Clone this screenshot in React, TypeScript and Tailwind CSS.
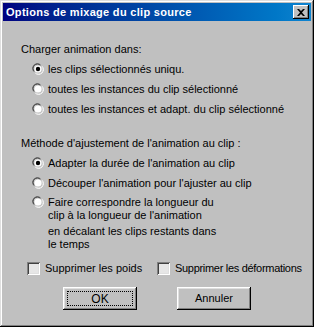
import React from "react";

const font = { fontFamily: '"Liberation Sans", Arial, sans-serif' };

function Radio({ checked }: { checked?: boolean }) {
  return (
    <svg width="12" height="12" viewBox="0 0 12 12" className="shrink-0">
      <path d="M1.5 8.5 A5 5 0 0 1 8.5 1.5" stroke="#808080" strokeWidth="1" fill="none" />
      <path d="M2.3 8.3 A4 4 0 0 1 8.3 2.3" stroke="#404040" strokeWidth="1" fill="none" />
      <circle cx="6" cy="6" r="3.6" fill="#fff" />
      <path d="M10.5 3.5 A5 5 0 0 1 3.5 10.5" stroke="#fff" strokeWidth="1" fill="none" />
      <path d="M9.7 3.7 A4 4 0 0 1 3.7 9.7" stroke="#dfdfdf" strokeWidth="1" fill="none" />
      {checked && <circle cx="6" cy="6" r="2.2" fill="#000" />}
    </svg>
  );
}

function Checkbox() {
  return (
    <div className="w-[13px] h-[13px] shrink-0 bg-[#e6e6e6] shadow-[inset_1px_1px_#808080,inset_-1px_-1px_#fff,inset_2px_2px_#404040,inset_-2px_-2px_#dfdfdf]" />
  );
}

function RadioRow({ checked, children }: { checked?: boolean; children: React.ReactNode }) {
  return (
    <div className="h-[20px] flex items-center pl-[11px]">
      <Radio checked={checked} />
      <span className="ml-[4px] leading-[13px]">{children}</span>
    </div>
  );
}

export default function App() {
  return (
    <div
      className="w-[314px] h-[327px] bg-[#c0c0c0] p-[3px] text-[11px] text-black shadow-[inset_-1px_-1px_#000,inset_1px_1px_#dfdfdf,inset_-2px_-2px_#808080,inset_2px_2px_#fff] flex flex-col"
      style={font}
    >
      <div className="h-[18px] bg-gradient-to-r from-[#000080] to-[#1084d0] flex items-center justify-between pl-[3px] pr-[2px]">
        <span className="text-white font-bold text-[11px] leading-[14px] tracking-[0.3px]">Options de mixage du clip source</span>
        <div className="w-[16px] h-[14px] bg-[#c0c0c0] shadow-[inset_-1px_-1px_#000,inset_1px_1px_#fff,inset_-2px_-2px_#808080] flex items-center justify-center">
          <svg width="8" height="7" viewBox="0 0 8 7">
            <path d="M0 0h2l2 2 2-2h2L5 3.5 8 7H6L4 5 2 7H0l3-3.5z" fill="#000" />
          </svg>
        </div>
      </div>
      <div className="pl-[18px] pt-[18px] flex flex-col">
        <div className="h-[20px] flex items-center">Charger animation dans:</div>
        <RadioRow checked>les clips sélectionnés uniqu.</RadioRow>
        <RadioRow>toutes les instances du clip sélectionné</RadioRow>
        <RadioRow>toutes les instances et adapt. du clip sélectionné</RadioRow>
        <div className="h-[20px] flex items-center mt-[14px]">Méthode d'ajustement de l'animation au clip :</div>
        <RadioRow checked>Adapter la durée de l'animation au clip</RadioRow>
        <RadioRow>Découper l'animation pour l'ajuster au clip</RadioRow>
        <div className="flex items-start pl-[11px] mt-[3px]">
          <Radio />
          <div className="ml-[4px] leading-[13px] flex flex-col">
            <span>Faire correspondre la longueur du</span>
            <span>clip à la longueur de l'animation</span>
            <span className="mt-[3px]">en décalant les clips restants dans</span>
            <span>le temps</span>
          </div>
        </div>
        <div className="h-[20px] flex items-center mt-[7px]">
          <div className="flex items-center ml-[6px] w-[130px]">
            <Checkbox />
            <span className="ml-[5px]">Supprimer les poids</span>
          </div>
          <div className="flex items-center">
            <Checkbox />
            <span className="ml-[5px] tracking-[-0.3px]">Supprimer les déformations</span>
          </div>
        </div>
        <div className="flex mt-[9px] ml-[42px] gap-[40px]">
          <button className="w-[74px] h-[23px] bg-[#c0c0c0] shadow-[inset_-1px_-1px_#000,inset_1px_1px_#fff,inset_-2px_-2px_#808080,inset_2px_2px_#dfdfdf] flex items-center justify-center p-[4px]">
            <span className="w-full h-full border border-dotted border-black flex items-center justify-center text-[12px]">OK</span>
          </button>
          <button className="w-[74px] h-[23px] bg-[#c0c0c0] shadow-[inset_-1px_-1px_#000,inset_1px_1px_#fff,inset_-2px_-2px_#808080,inset_2px_2px_#dfdfdf] flex items-center justify-center text-[11px]">
            Annuler
          </button>
        </div>
      </div>
    </div>
  );
}
